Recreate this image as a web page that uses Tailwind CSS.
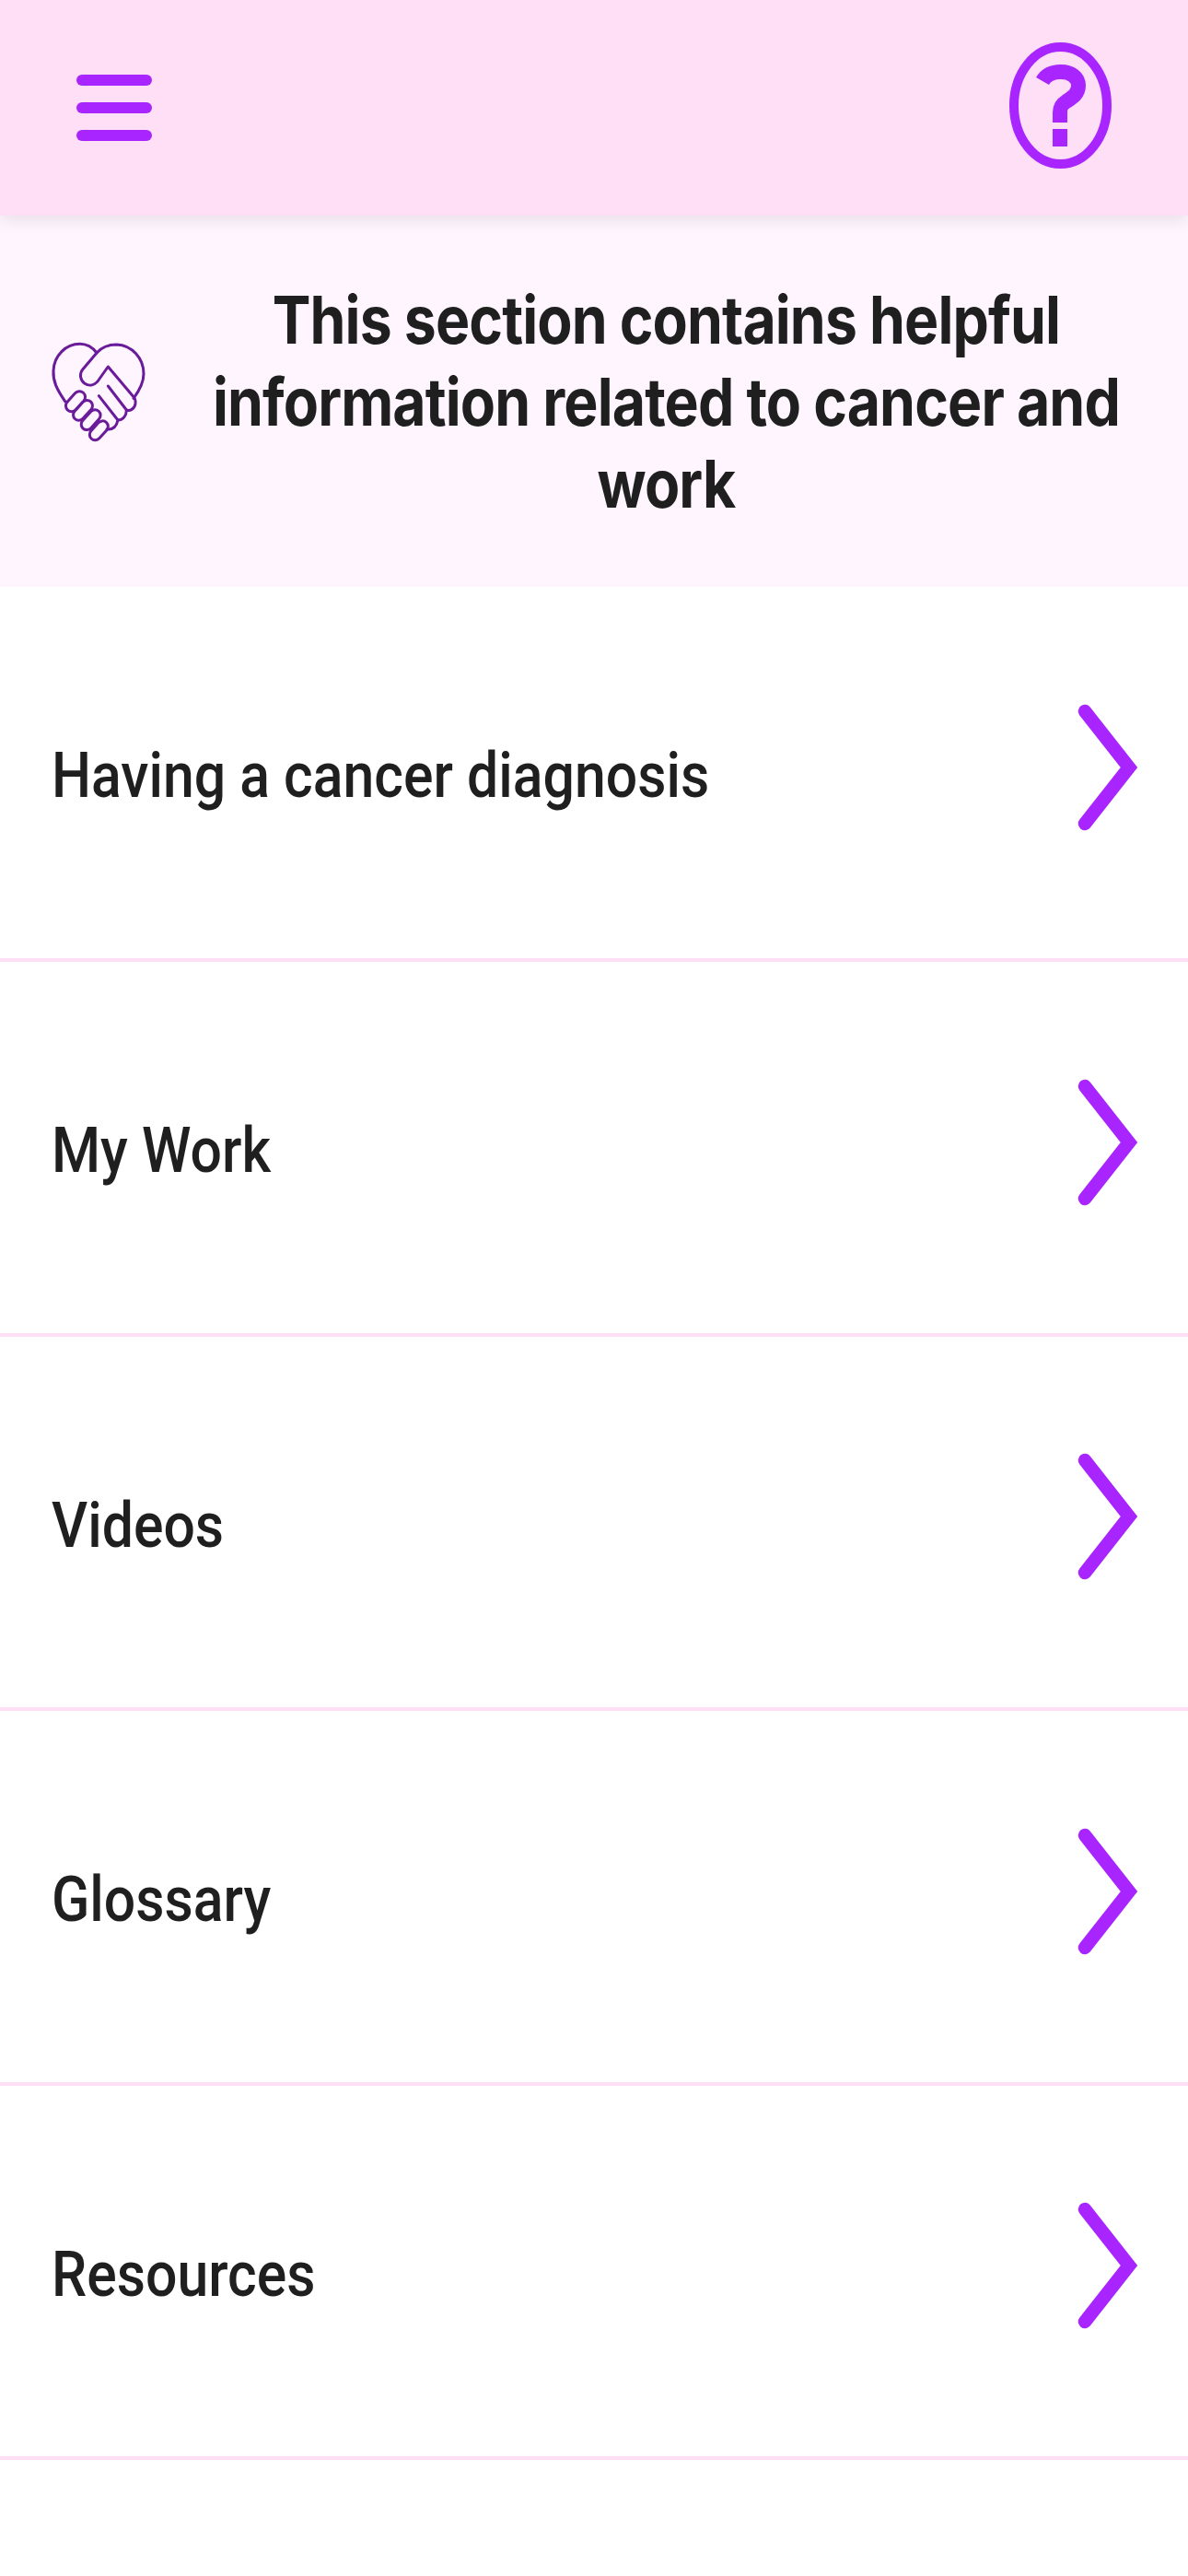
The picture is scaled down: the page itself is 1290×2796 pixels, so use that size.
<!DOCTYPE html>
<html><head><meta charset="utf-8"><script src="https://cdn.jsdelivr.net/npm/@tailwindcss/browser@4"></script></head>
<body class="bg-white font-['Inter','Liberation_Sans',sans-serif]">
<div class="w-[1290px] h-[2796px] bg-white overflow-hidden flex flex-col">
<header class="relative z-10 h-[234px] shrink-0 bg-[#ffdff5] shadow-[0_4px_18px_rgba(0,0,0,0.10)] flex items-center justify-between px-[83px]">
  <div class="flex flex-col gap-[17.5px] w-[82px]">
    <div class="h-[12.5px] rounded-full bg-[#a925ff]"></div>
    <div class="h-[12.5px] rounded-full bg-[#a925ff]"></div>
    <div class="h-[12.5px] rounded-full bg-[#a925ff]"></div>
  </div>
  <svg class="-mt-[5px]" width="111" height="137" viewBox="0 0 111 137" fill="none">
    <ellipse cx="55.5" cy="68.5" rx="50.5" ry="63.5" stroke="#a925ff" stroke-width="10"/>
    <path d="M36 42C40 35 47 32 56 32C67 32 75 38 75 47C75 56 68 60 62 64C57 67 55 70 55 76V87" stroke="#a925ff" stroke-width="16"/>
    <rect x="47" y="94" width="16" height="19" fill="#a925ff"/>
  </svg>
</header>
<section class="h-[403px] shrink-0 bg-[#fff5ff] flex items-center pl-[55px] pr-[6px]">
  <svg class="shrink-0 mt-[-19px]" width="105" height="115" viewBox="75 55 315 345" fill="none" stroke="#6a1b9a" stroke-width="9" stroke-linecap="round" stroke-linejoin="round">
    <path d="M122 255C95 215 82 190 84 155C86 105 125 68 170 68C195 68 212 80 225 97C240 80 262 70 290 70C340 72 378 115 378 165C378 195 362 222 345 245"/>
    <path d="M225 97L180 150C168 165 170 185 186 197C200 206 216 203 228 190L262 142L345 240C356 254 352 274 338 282C333 285 328 285 322 283L262 205M322 283C322 300 312 316 294 316L232 237M294 316C290 335 278 348 258 346"/>
    <rect x="118" y="236" width="76" height="38" rx="19" transform="rotate(-48 156 255)"/>
    <rect x="142" y="266" width="76" height="36" rx="18" transform="rotate(-48 180 284)"/>
    <rect x="168" y="297" width="76" height="36" rx="18" transform="rotate(-48 206 315)"/>
    <rect x="196" y="332" width="72" height="36" rx="18" transform="rotate(-48 232 350)"/>
  </svg>
  <h1 class="flex-1 ml-[-4px] mr-[4px] whitespace-nowrap text-center text-[#1f1f1f] text-[72px] leading-[89px] font-bold tracking-[-1px] scale-x-[0.868]">This section contains helpful<br>information related to cancer and<br>work</h1>
</section>
<nav class="flex flex-col text-[#1f1f1f] font-['Roboto',sans-serif]">
  <a class="h-[407px] border-b-4 border-[#ffdff5] flex items-center justify-between pl-[56px] pr-[55px]"><span class="mt-[7px] text-[69px] font-medium origin-left scale-x-[0.88]">Having a cancer diagnosis</span><svg class="mt-[-11px]" width="66" height="140" viewBox="0 0 66 140" fill="none"><path d="M9 9L57 70L9 131" stroke="#a925ff" stroke-width="14.5" stroke-linecap="round"/></svg></a>
  <a class="h-[406.5px] border-b-4 border-[#ffdff5] flex items-center justify-between pl-[56px] pr-[55px]"><span class="mt-[7px] text-[69px] font-medium origin-left scale-x-[0.88]">My Work</span><svg class="mt-[-11px]" width="66" height="140" viewBox="0 0 66 140" fill="none"><path d="M9 9L57 70L9 131" stroke="#a925ff" stroke-width="14.5" stroke-linecap="round"/></svg></a>
  <a class="h-[406.5px] border-b-4 border-[#ffdff5] flex items-center justify-between pl-[56px] pr-[55px]"><span class="mt-[7px] text-[69px] font-medium origin-left scale-x-[0.88]">Videos</span><svg class="mt-[-11px]" width="66" height="140" viewBox="0 0 66 140" fill="none"><path d="M9 9L57 70L9 131" stroke="#a925ff" stroke-width="14.5" stroke-linecap="round"/></svg></a>
  <a class="h-[406.5px] border-b-4 border-[#ffdff5] flex items-center justify-between pl-[56px] pr-[55px]"><span class="mt-[7px] text-[69px] font-medium origin-left scale-x-[0.88]">Glossary</span><svg class="mt-[-11px]" width="66" height="140" viewBox="0 0 66 140" fill="none"><path d="M9 9L57 70L9 131" stroke="#a925ff" stroke-width="14.5" stroke-linecap="round"/></svg></a>
  <a class="h-[406.5px] border-b-4 border-[#ffdff5] flex items-center justify-between pl-[56px] pr-[55px]"><span class="mt-[7px] text-[69px] font-medium origin-left scale-x-[0.88]">Resources</span><svg class="mt-[-11px]" width="66" height="140" viewBox="0 0 66 140" fill="none"><path d="M9 9L57 70L9 131" stroke="#a925ff" stroke-width="14.5" stroke-linecap="round"/></svg></a>
</nav>
</div>
</body></html>
